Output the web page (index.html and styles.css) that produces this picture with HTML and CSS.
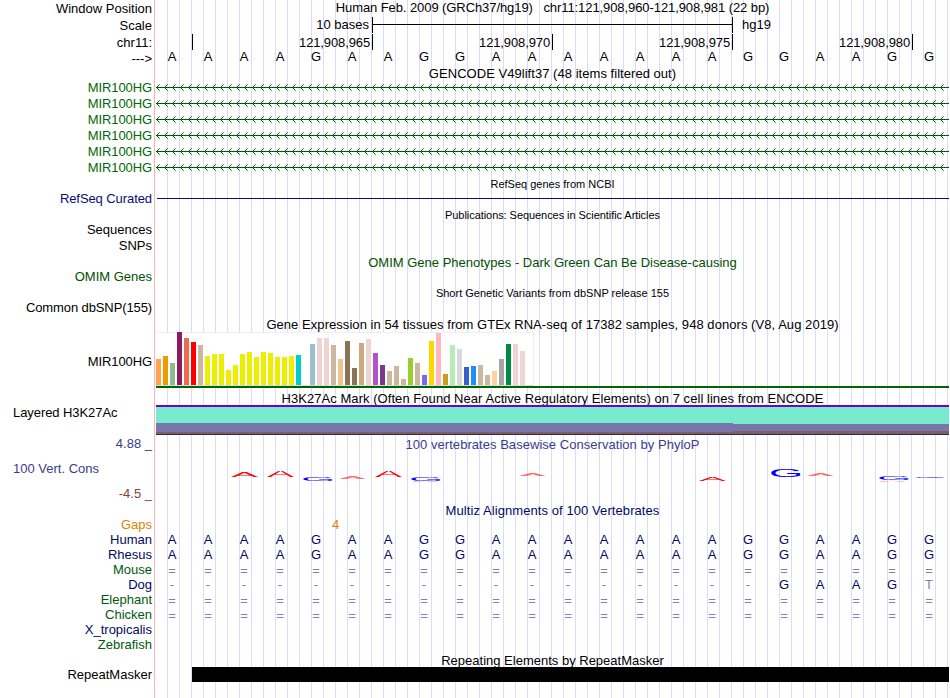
FILE: index.html
```html
<!DOCTYPE html>
<html lang="en">
<head>
<meta charset="utf-8">
<title>Genome Browser hg19 chr11:121,908,960-121,908,981</title>
<link rel="stylesheet" href="styles.css">
</head>
<body>
<main class="browser">
  <section class="track position">
    <div class="labels"><span>Window Position</span><span>Scale</span><span>chr11:</span><span>---&gt;</span></div>
    <div class="data">
      <h2>Human Feb. 2009 (GRCh37/hg19) &nbsp; chr11:121,908,960-121,908,981 (22 bp)</h2>
      <div class="scale"><span class="scale-size">10 bases</span><span class="scale-bar"></span><span>hg19</span></div>
      <div class="ruler"><span></span><span>121,908,965</span><span>121,908,970</span><span>121,908,975</span><span>121,908,980</span></div>
      <div class="bases" data-seq="AAAAGAAGGAAAAAAAGGAAGG"></div>
    </div>
  </section>

  <section class="track gencode">
    <div class="labels"><span>MIR100HG</span><span>MIR100HG</span><span>MIR100HG</span><span>MIR100HG</span><span>MIR100HG</span><span>MIR100HG</span></div>
    <div class="data">
      <h2>GENCODE V49lift37 (48 items filtered out)</h2>
      <svg class="genes" width="793" height="96">
        <defs>
          <pattern id="intron" width="8" height="16" patternUnits="userSpaceOnUse">
            <path class="chevron" d="M1 6h1v1h-1z M1 8h1v1h-1z M2 5h1v1h-1z M2 9h1v1h-1z"/>
            <path class="chevron tip" d="M3 4h1v1h-1z M3 10h1v1h-1z"/>
            <path class="axis" d="M0 7.5H8"/>
          </pattern>
        </defs>
        <rect width="793" height="96" fill="url(#intron)"/>
      </svg>
    </div>
  </section>

  <section class="track refseq">
    <div class="labels"><span>RefSeq Curated</span></div>
    <div class="data"><h2 class="small">RefSeq genes from NCBI</h2><div class="refseq-line"></div></div>
  </section>

  <section class="track pubs">
    <div class="labels"><span>Sequences</span><span>SNPs</span></div>
    <div class="data"><h2 class="small">Publications: Sequences in Scientific Articles</h2></div>
  </section>

  <section class="track omim">
    <div class="labels"><span>OMIM Genes</span></div>
    <div class="data"><h2>OMIM Gene Phenotypes - Dark Green Can Be Disease-causing</h2></div>
  </section>

  <section class="track dbsnp">
    <div class="labels"><span>Common dbSNP(155)</span></div>
    <div class="data"><h2 class="small">Short Genetic Variants from dbSNP release 155</h2></div>
  </section>

  <section class="track gtex">
    <div class="labels"><span>MIR100HG</span></div>
    <div class="data">
      <h2>Gene Expression in 54 tissues from GTEx RNA-seq of 17382 samples, 948 donors (V8, Aug 2019)</h2>
      <div class="tissues" id="tissues"></div>
      <div class="gene-model"></div>
    </div>
  </section>

  <section class="track h3k27">
    <div class="labels left"><span>Layered H3K27Ac</span></div>
    <div class="data">
      <h2>H3K27Ac Mark (Often Found Near Active Regulatory Elements) on 7 cell lines from ENCODE</h2>
      <div class="layers"><div class="layer-a"></div><div class="layer-b"></div></div>
    </div>
  </section>

  <section class="track phylop">
    <div class="labels"><span>4.88 _</span><span class="name">100 Vert. Cons</span><span class="min">-4.5 _</span></div>
    <div class="data">
      <h2>100 vertebrates Basewise Conservation by PhyloP</h2>
      <svg class="logo" id="logo" width="793" height="20"></svg>
    </div>
  </section>

  <section class="track multiz">
    <div class="labels"><span class="gap">Gaps</span><span>Human</span><span>Rhesus</span><span class="far">Mouse</span><span>Dog</span><span class="far">Elephant</span><span class="far">Chicken</span><span>X_tropicalis</span><span class="far">Zebrafish</span></div>
    <div class="data">
      <h2>Multiz Alignments of 100 Vertebrates</h2>
      <div class="gap gap-count">4</div>
      <div class="bases" data-seq="AAAAGAAGGAAAAAAAGGAAGG"></div>
      <div class="bases" data-seq="AAAAGAAGGAAAAAAAGGAAGG"></div>
      <div class="bases" data-seq="======================"></div>
      <div class="bases" data-seq="-----------------GAAGT"></div>
      <div class="bases" data-seq="======================"></div>
      <div class="bases" data-seq="======================"></div>
    </div>
  </section>

  <section class="track repeats">
    <div class="labels"><span>RepeatMasker</span></div>
    <div class="data"><h2>Repeating Elements by RepeatMasker</h2><div class="repeat-item"></div></div>
  </section>
</main>
<script src="script.js"></script>
</body>
</html>
```
FILE: styles.css
```css
* { box-sizing: border-box; }
body {
  margin: 0;
  background: #fff;
  color: #000;
  font: 13px/15px "Liberation Sans", Arial, sans-serif;
}
.browser {
  width: 949px;
  height: 698px;
  overflow: hidden;
  background:
    linear-gradient(#ffb4b4, #ffb4b4) 154px 0 / 1px 100% no-repeat,
    repeating-linear-gradient(90deg, #dcdcfa 0 1px, transparent 1px 12px) 167px 0 / 782px 100% no-repeat;
}
.track { display: grid; grid-template-columns: 152px 793px; column-gap: 4px; }
.labels { display: flex; flex-direction: column; align-items: flex-end; white-space: pre; }
.data { display: flex; flex-direction: column; min-width: 0; }
h2 { margin: 0; font-size: 13px; font-weight: normal; line-height: 15px; text-align: center; white-space: nowrap; }
h2.small { font-size: 11px; line-height: 13px; }

.position { height: 66px; }
.position .labels { padding-top: 1px; gap: 2px; }
.position .labels span:last-child { margin-top: -1px; }
.position h2 { letter-spacing: -0.08px; }
.scale { display: flex; height: 16px; margin-top: 2px; }
.scale-size { width: 216px; padding-right: 3px; text-align: right; }
.scale-bar {
  width: 361px;
  margin-right: 9px;
  border: solid #000;
  border-width: 0 1px;
  background: linear-gradient(#000, #000) 0 7px / 100% 1px no-repeat;
}
.ruler { display: grid; grid-template-columns: 37px repeat(4, 180px); height: 15px; margin-top: 1px; letter-spacing: -0.12px; }
.ruler span { padding: 1px 2px 0 0; border-right: 1px solid #000; text-align: right; }
.bases {
  display: grid;
  grid-template-columns: repeat(21, 36px) 38px;
  height: 15px;
  margin-left: -2px;
  text-align: center;
}

.gencode { height: 110px; }
.gencode .labels { padding-top: 14px; gap: 1px; color: #046a04; letter-spacing: -0.1px; }
.gencode h2 { letter-spacing: 0.04px; }
.genes { display: block; margin-top: -1px; }
.axis { stroke: #005a00; stroke-width: 1; }
.chevron { fill: #006400; }
.chevron.tip { fill-opacity: 0.6; }

.refseq { height: 31px; color: #0c0c78; }
.refseq .labels { padding-top: 15px; letter-spacing: -0.08px; }
.refseq h2 { margin-top: 2px; color: #000; }
.refseq-line { height: 1px; margin: 7px 0 0 1px; background: #0c0c78; }

.pubs { height: 48px; }
.pubs .labels { padding-top: 15px; gap: 1px; }
.pubs h2 { margin-top: 2px; letter-spacing: -0.06px; }

.omim { height: 30px; color: #005000; }
.omim .labels { padding-top: 14px; }

.dbsnp { height: 32px; }
.dbsnp .labels { padding-top: 15px; letter-spacing: -0.11px; }
.dbsnp h2 { margin-top: 2px; }

.gtex { height: 71px; }
.gtex .labels { padding-top: 37px; letter-spacing: -0.1px; }
.gtex h2 { letter-spacing: 0.055px; }
.tissues {
  display: flex;
  align-items: flex-end;
  gap: 2px;
  width: 378px;
  height: 54px;
  background: #fff;
  box-shadow: inset 0 -1px #dcdcdc, inset -1px 1px #f0f0f0;
  padding-bottom: 1px;
}
.tissues i { width: 5px; flex: none; }
.gene-model { height: 2px; background: #006400; }

.h3k27 { height: 47px; }
.h3k27 .labels { padding-top: 17px; letter-spacing: -0.07px; }
.labels.left { align-items: flex-start; padding-left: 13px; }
.h3k27 h2 { margin-top: 3px; letter-spacing: 0.05px; }
.layers { display: flex; height: 30px; margin-top: -1px; }
.layer-a { width: 577px; background: linear-gradient(#7400c8 0 2px, #77ebcd 2px 18px, #7a75aa 18px 27px, #7a6060 27px 29px, #2f2850 29px); }
.layer-b { flex: 1; background: linear-gradient(#7400c8 0 2px, #77ebcd 2px 19px, #7a75aa 19px 26px, #7a6060 26px 29px, #2f2850 29px); }

.phylop { height: 68px; color: #3c3c8c; }
.phylop .labels { padding-top: 1px; gap: 10px; }
.phylop .name { align-self: flex-start; padding-left: 13px; }
.phylop .min { color: #8c3c3c; }
.phylop h2 { margin-top: 2px; letter-spacing: 0.04px; }
.logo { display: block; margin-top: 15px; font-size: 10px; }

.multiz { height: 150px; color: #000a64; }
.multiz .labels { padding-top: 14px; }
.multiz h2 { letter-spacing: 0.08px; }
.multiz .far { color: #005a0a; }
.gap { color: #e08200; }
.gap-count { padding-left: 176px; margin-top: -1px; }
.faint { color: #8080b2; }
.unaligned { padding-top: 1px; }

.repeats { height: 45px; }
.repeats .labels { padding-top: 14px; }
.repeat-item { height: 15px; margin: -1px 0 0 36px; background: #000; }
```
FILE: script.js
```js
document.querySelectorAll('.bases').forEach(row => {
  for (const base of row.dataset.seq) {
    const cell = document.createElement('span');
    cell.textContent = base;
    if ('=-T'.includes(base)) cell.classList.add('faint');
    if (base === '=') cell.classList.add('unaligned');
    row.append(cell);
  }
});

// Median expression per tissue: [bar height, tissue colour]
const tissues = [
  [26, '#ffa54f'], [29, '#ee9a00'], [22, '#8fbc8f'], [53, '#8b1c62'], [47, '#ee6a50'], [43, '#ff0000'],
  [40, '#cdb79e'], [29, '#eeee00'], [31, '#eeee00'], [31, '#eeee00'], [15, '#eeee00'], [20, '#eeee00'],
  [31, '#eeee00'], [33, '#eeee00'], [28, '#eeee00'], [33, '#eeee00'], [32, '#eeee00'], [28, '#eeee00'],
  [28, '#eeee00'], [29, '#eeee00'], [30, '#00cdcd'], [0, '#ee82ee'], [41, '#9ac0cd'], [47, '#eed5d2'],
  [47, '#eed5d2'], [40, '#cdb79e'], [26, '#eec591'], [44, '#8b7355'], [17, '#8b7355'], [42, '#cdaa7d'],
  [46, '#eed5d2'], [32, '#b452cd'], [20, '#7a378b'], [14, '#cdb79e'], [19, '#cdb79e'], [6, '#cdb79e'],
  [27, '#9acd32'], [22, '#cdb79e'], [10, '#7b68ee'], [44, '#ffd700'], [52, '#ffb6c1'], [11, '#cd9b1d'],
  [40, '#b4eeb4'], [36, '#d9d9d9'], [18, '#3a5fcd'], [19, '#1e90ff'], [20, '#cdb79e'], [10, '#cdb79e'],
  [14, '#ffd39b'], [26, '#a6a6a6'], [41, '#008b45'], [41, '#eed5d2'], [34, '#eed5d2'], [0, '#ff00ff']
];
const chart = document.getElementById('tissues');
tissues.forEach(([h, color]) => {
  const bar = document.createElement('i');
  bar.style.height = h + 'px';
  bar.style.background = color;
  chart.append(bar);
});

// Conservation logo: [letter, left, top, bottom, colour, opacity], in logo coordinates
const letters = [
  ['A', 75, 5, 10, 'red'], ['A', 111, 4, 10, 'red'], ['G', 147, 10, 14, 'blue'], ['A', 183, 10, 12, 'red', 0.6],
  ['A', 219, 4, 10, 'red'], ['G', 255, 10, 14, 'blue'], ['A', 255, 14, 15, 'red'], ['A', 363, 7, 9, 'red', 0.6],
  ['A', 543, 10, 14, 'red'], ['G', 615, 2, 10, 'blue'], ['A', 651, 7, 9, 'red', 0.6],
  ['G', 723, 10, 13.3, 'blue'], ['A', 723, 13.3, 14.5, 'red'], ['G', 759, 10, 11, 'blue']
];
const logo = document.getElementById('logo');
for (const [letter, x, top, bottom, color, opacity = 1] of letters) {
  const t = document.createElementNS('http://www.w3.org/2000/svg', 'text');
  const sx = letter === 'A' ? 4.06 : 4.4;
  const left = letter === 'A' ? x : x - 2;
  t.setAttribute('transform', `translate(${left} ${bottom}) scale(${sx} ${(bottom - top) / 7})`);
  t.setAttribute('fill', color);
  t.setAttribute('fill-opacity', opacity);
  t.textContent = letter;
  logo.append(t);
}
```
